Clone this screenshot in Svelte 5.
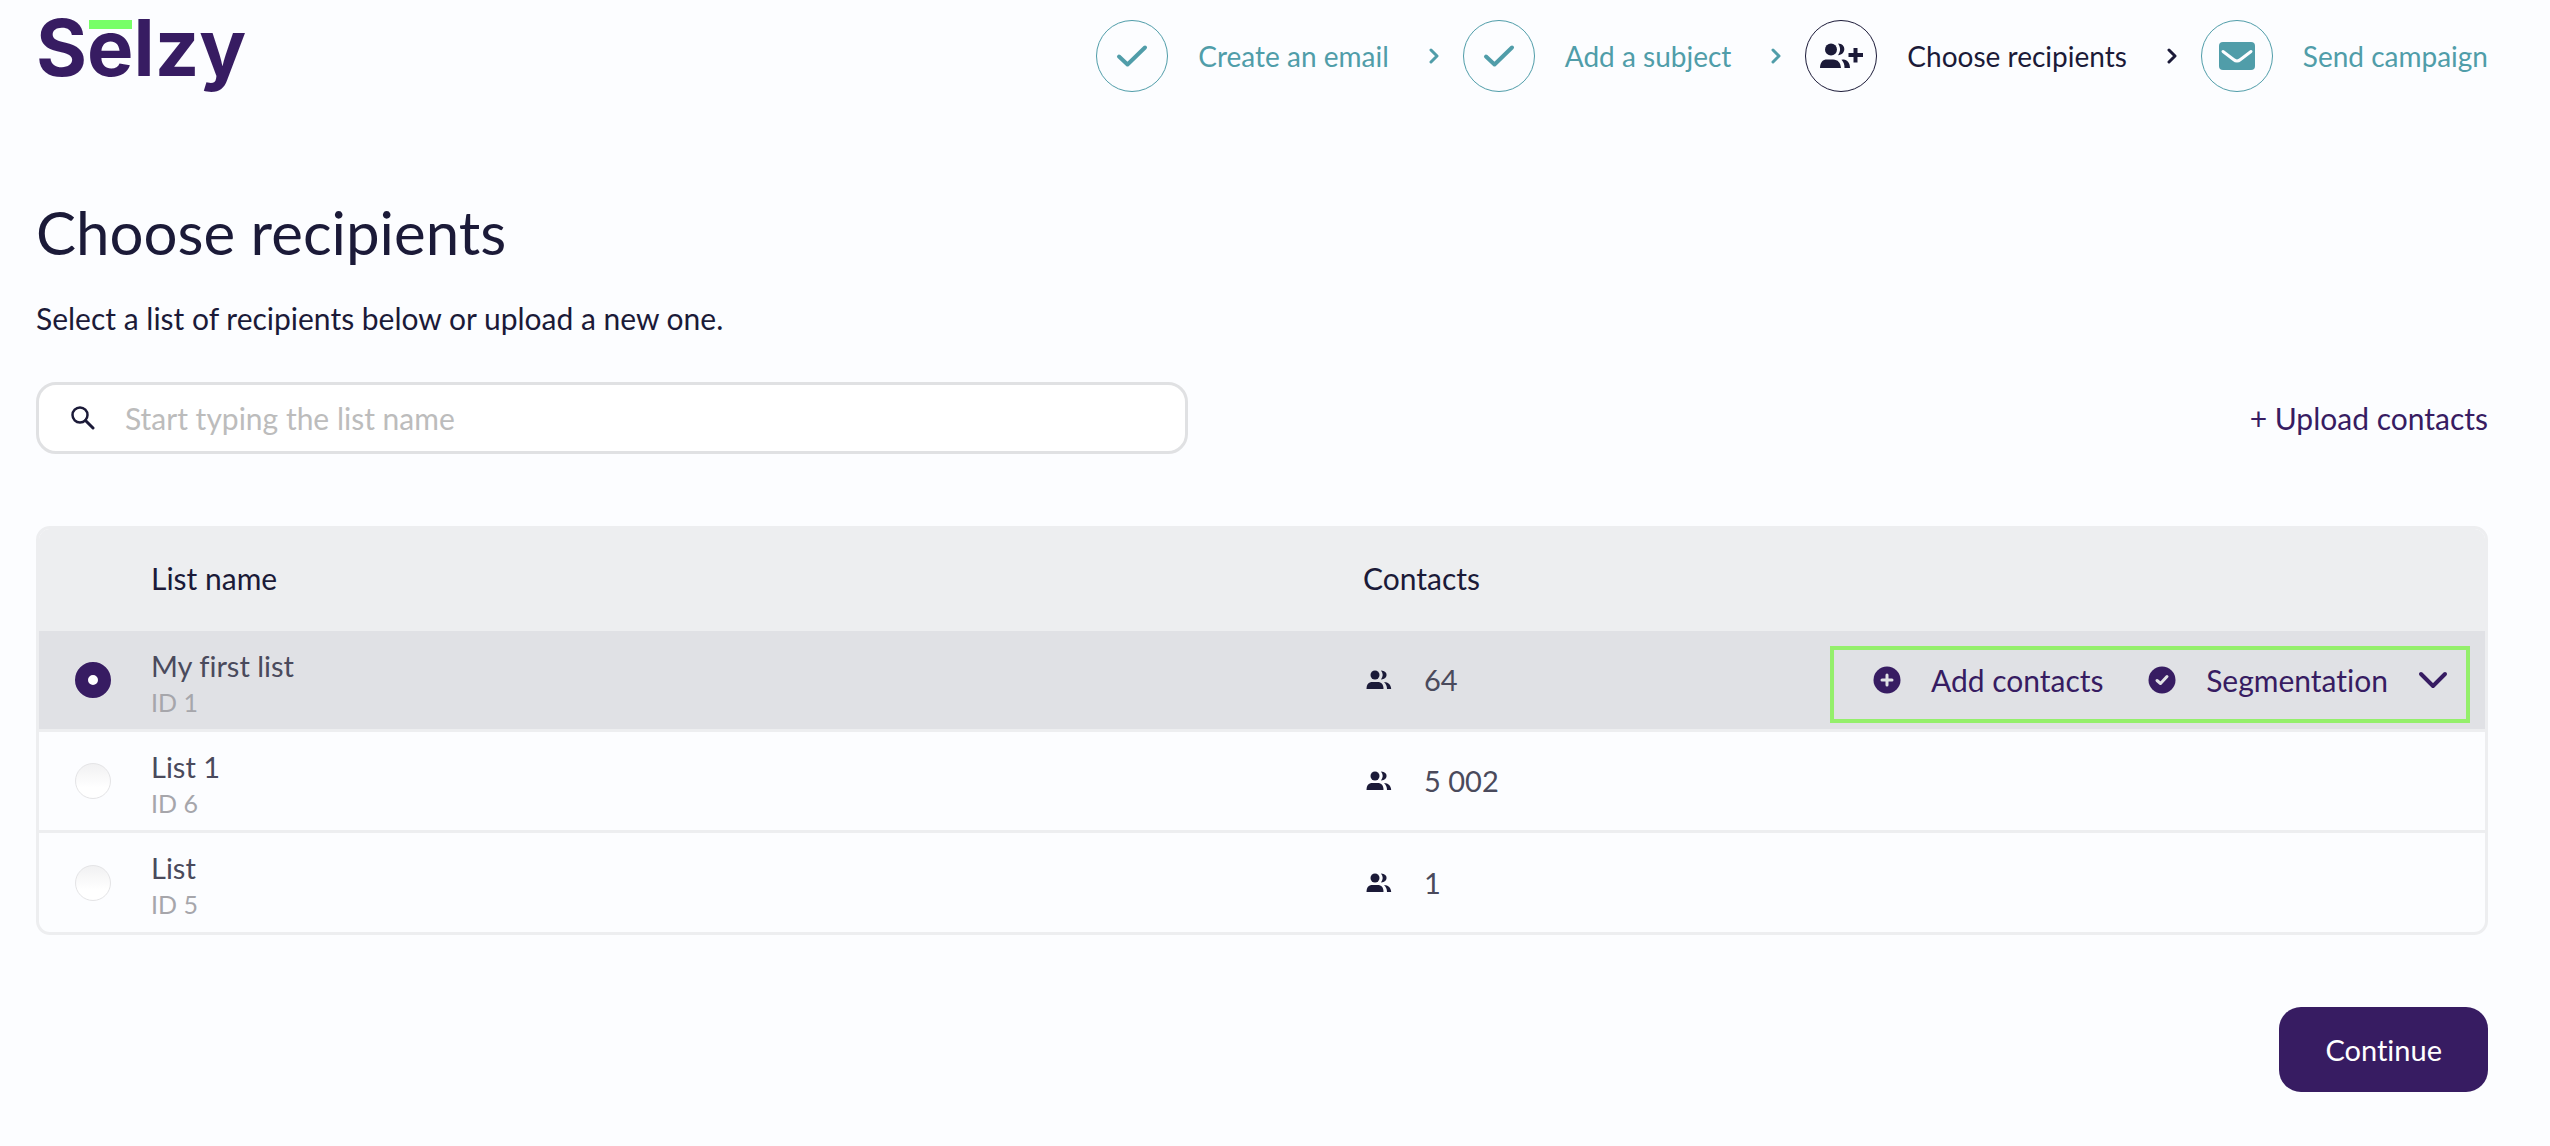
<script lang="ts">
	interface Step {
		label: string;
		icon: 'check' | 'people' | 'mail';
		current?: boolean;
	}

	interface ContactList {
		id: number;
		name: string;
		contacts: string;
	}

	const steps: Step[] = [
		{ label: 'Create an email', icon: 'check' },
		{ label: 'Add a subject', icon: 'check' },
		{ label: 'Choose recipients', icon: 'people', current: true },
		{ label: 'Send campaign', icon: 'mail' }
	];

	const lists: ContactList[] = [
		{ id: 1, name: 'My first list', contacts: '64' },
		{ id: 6, name: 'List 1', contacts: '5 002' },
		{ id: 5, name: 'List', contacts: '1' }
	];

	let query = $state('');
	let selectedId = $state(1);

	let visibleLists = $derived(
		lists.filter((list) => list.name.toLowerCase().includes(query.toLowerCase()))
	);
</script>

<div class="page">
	<header>
		<a class="logo" href="/" aria-label="Selzy">S<span class="accent">e</span>lzy</a>
		<nav aria-label="Campaign steps">
			<ol class="steps">
				{#each steps as step, index (step.label)}
					<li class:current={step.current}>
						<a href="#step-{index + 1}" aria-current={step.current ? 'step' : undefined}>
							<span class="step-icon">
								{#if step.icon === 'check'}
									<svg width="32" height="24" viewBox="0 0 32 24">
										<path d="M3 12.5 L11.500 20.500 L29 3.500" class="line" stroke-width="4" />
									</svg>
								{:else if step.icon === 'people'}
									<svg width="44" height="26" viewBox="0 0 44 26">
										<circle cx="12" cy="6.500" r="6" />
										<path d="M1 25 C1 19 4 16.500 8 16.500 H14 C19 16.500 21.500 20 22 25 Z" />
										<path d="M19 .6 C27.500 .6 27.500 12 19 12.200 C21.800 8.500 21.800 4.500 19 .6 Z" />
										<path d="M24 16.600 C28 16.200 31 20 31 25 H25.500 C25.500 21 24.500 19 22.500 16.800 Z" />
										<path d="M36.500 5 V19.500 M29.500 12 H44" class="line square" stroke-width="4" />
									</svg>
								{:else}
									<svg width="38" height="30" viewBox="0 0 38 30">
										<rect x="1" y="1" width="36" height="28" rx="4" />
										<path d="M5 10.500 L15.500 18.500 Q19 21.500 22.500 18.500 L33 10.500" class="flap" />
									</svg>
								{/if}
							</span>
							<span>{step.label}</span>
						</a>
						{#if index < steps.length - 1}
							<svg class="next" width="10" height="16" viewBox="0 0 10 16">
								<path d="M2 2 L8 8 L2 14" class="line" stroke-width="3" />
							</svg>
						{/if}
					</li>
				{/each}
			</ol>
		</nav>
	</header>

	<main>
		<h1>Choose recipients</h1>
		<p class="intro">Select a list of recipients below or upload a new one.</p>

		<div class="toolbar">
			<label class="search">
				<svg width="24" height="24" viewBox="0 0 24 24">
					<circle cx="9" cy="9" r="7.500" fill="none" stroke="currentColor" stroke-width="2.500" />
					<path d="M14.500 14.500 L22 22" class="line" stroke-width="3" />
				</svg>
				<input
					type="text"
					placeholder="Start typing the list name"
					aria-label="List name"
					bind:value={query}
				/>
			</label>
			<a class="upload" href="#upload">+ Upload contacts</a>
		</div>

		<div class="table-box">
			<table>
				<thead>
					<tr>
						<th class="pick"></th>
						<th class="name">List name</th>
						<th class="contacts">Contacts</th>
						<th></th>
					</tr>
				</thead>
				<tbody>
					{#each visibleLists as list (list.id)}
						<tr class:selected={list.id === selectedId}>
							<td class="pick">
								<input
									type="radio"
									name="list"
									id="list-{list.id}"
									value={list.id}
									bind:group={selectedId}
								/>
							</td>
							<td class="name">
								<label for="list-{list.id}">
									<span class="title">{list.name}</span>
									<span class="list-id">ID {list.id}</span>
								</label>
							</td>
							<td class="contacts">
								<div class="count">
									<svg width="26" height="20" viewBox="0 0 26 20">
										<circle cx="9" cy="5" r="4.500" />
										<path d="M0.500 19 C0.500 14.500 2.500 12 6.500 12 H11.500 C15.500 12 17.500 14.500 17.500 19 Z" />
										<path d="M15 .6 C22.500 .4 22.500 9.600 15 9.400 C17.300 6.500 17.300 3.500 15 .6 Z" />
										<path d="M18 12 C22.500 12 25 15 25.200 19 H21 C21 16 20 14 18 12 Z" />
									</svg>
									<span>{list.contacts}</span>
								</div>
							</td>
							<td class="tools">
								{#if list.id === selectedId}
									<div class="actions">
										<button type="button">
											<svg width="28" height="28" viewBox="0 0 28 28">
												<circle cx="14" cy="14" r="13.500" />
												<path d="M14 9 V19 M9 14 H19" class="mark" />
											</svg>
											<span>Add contacts</span>
										</button>
										<button type="button">
											<svg width="28" height="28" viewBox="0 0 28 28">
												<circle cx="14" cy="14" r="13.500" />
												<path d="M9 14.500 L12.500 17.500 L19 10.500" class="mark" />
											</svg>
											<span>Segmentation</span>
											<svg class="caret" width="30" height="18" viewBox="0 0 30 18">
												<path d="M3 3 L15 15 L27 3" class="line" stroke-width="4" />
											</svg>
										</button>
									</div>
								{/if}
							</td>
						</tr>
					{/each}
				</tbody>
			</table>
		</div>

		<div class="footer">
			<button type="button" class="continue">Continue</button>
		</div>
	</main>
</div>

<style>
	:global(body) {
		background: #fcfdff;
	}

	.page {
		box-sizing: border-box;
		padding: 20px 62px 54px 36px;
		font-family: Lato, 'Open Sans', sans-serif;
		font-size: 30px;
		font-variant-ligatures: none;
		line-height: 40px;
		color: #1b1a38;
	}

	a {
		color: inherit;
		text-decoration: none;
	}

	button,
	input {
		font: inherit;
		font-variant-ligatures: inherit;
		color: inherit;
	}

	button {
		border: none;
		background: none;
		padding: 0;
		cursor: pointer;
	}

	svg {
		flex: none;
		display: block;
		fill: currentColor;
	}

	.line {
		fill: none;
		stroke: currentColor;
		stroke-linecap: round;
		stroke-linejoin: round;
	}

	.square {
		stroke-linecap: butt;
	}

	.flap {
		fill: none;
		stroke: #fcfdff;
		stroke-width: 3;
		stroke-linecap: round;
	}

	.mark {
		fill: none;
		stroke: #e0e1e5;
		stroke-width: 3;
		stroke-linecap: round;
		stroke-linejoin: round;
	}

	header {
		display: flex;
		justify-content: space-between;
		align-items: flex-start;
	}

	.logo {
		font-family: Inter, sans-serif;
		font-size: 78px;
		font-weight: 700;
		line-height: 56px;
		color: #371c62;
	}

	.accent {
		position: relative;
	}

	.accent::before {
		content: '';
		position: absolute;
		top: 20px;
		left: 2px;
		right: 2px;
		height: 9px;
		background: #77ff67;
	}

	.steps {
		display: flex;
		gap: 24px;
		margin: 0;
		padding: 0;
		list-style: none;
		font-size: 28px;
		color: #509da9;
	}

	.steps li {
		display: flex;
		align-items: center;
		gap: 40px;
	}

	.steps a {
		display: flex;
		align-items: center;
		gap: 30px;
	}

	.steps .current {
		color: #1b1a38;
	}

	.step-icon {
		box-sizing: border-box;
		display: flex;
		align-items: center;
		justify-content: center;
		width: 72px;
		height: 72px;
		border: 1px solid currentColor;
		border-radius: 50%;
	}

	h1 {
		margin: 104px 0 30px;
		font-size: 60px;
		font-weight: 400;
		line-height: 72px;
	}

	.intro {
		margin: 0;
	}

	.toolbar {
		display: flex;
		justify-content: space-between;
		align-items: center;
		margin: 44px 0 72px;
	}

	.search {
		box-sizing: border-box;
		display: flex;
		align-items: center;
		gap: 30px;
		width: 47%;
		height: 72px;
		padding: 0 32px;
		border: 3px solid #e0e1e3;
		border-radius: 20px;
		background: #fff;
	}

	.search input {
		flex: 1;
		min-width: 0;
		padding: 0;
		border: none;
		outline: none;
		background: none;
	}

	.search input::placeholder {
		color: #bcbcbc;
		opacity: 1;
	}

	.upload {
		color: #371c62;
	}

	.table-box {
		border: 3px solid #edeef0;
		border-radius: 14px;
		overflow: hidden;
	}

	table {
		width: 100%;
		border-spacing: 0;
		table-layout: fixed;
	}

	th,
	td {
		box-sizing: border-box;
		padding: 0;
		text-align: left;
	}

	th {
		height: 102px;
		padding-bottom: 4px;
		background: #edeef0;
		font-weight: 400;
	}

	td {
		height: 101px;
		border-bottom: 3px solid #edeef0;
		color: #4a4a5c;
	}

	tr:last-child td {
		height: 99px;
		border-bottom: none;
	}

	.selected td {
		background: #e0e1e5;
	}

	.pick {
		width: 112px;
	}

	td.pick {
		padding-left: 36px;
	}

	.name {
		width: 1212px;
	}

	.contacts {
		width: 440px;
	}

	input[type='radio'] {
		appearance: none;
		display: block;
		box-sizing: border-box;
		width: 36px;
		height: 36px;
		margin: 0;
		border: 1px solid #e4e4e6;
		border-radius: 50%;
		background: linear-gradient(#f1f1f2, #fff 70%);
	}

	input[type='radio']:checked {
		border: 13px solid #371c62;
		background: #fff;
	}

	.title,
	.list-id {
		display: block;
		line-height: 37px;
	}

	.title {
		padding-top: 7px;
		font-size: 29px;
	}

	.list-id {
		font-size: 25px;
		color: #a6a6ab;
	}

	.count {
		display: flex;
		align-items: center;
		gap: 32px;
		padding-left: 3px;
		font-size: 29px;
	}

	.count svg {
		color: #1b1a38;
	}

	.tools {
		padding-right: 15px;
	}

	.actions {
		box-sizing: border-box;
		display: flex;
		align-items: center;
		justify-content: space-between;
		width: 640px;
		height: 77px;
		margin: 8px 0 0 auto;
		padding: 0 18px 8px 39px;
		border: 4px solid #94ef6b;
	}

	.actions button {
		display: flex;
		align-items: center;
		gap: 30px;
		color: #371c62;
	}

	.footer {
		display: flex;
		justify-content: flex-end;
		margin-top: 72px;
	}

	.continue {
		height: 85px;
		padding: 0 46px;
		border-radius: 22px;
		background: #371c62;
		color: #fff;
		font-size: 29px;
	}
</style>
